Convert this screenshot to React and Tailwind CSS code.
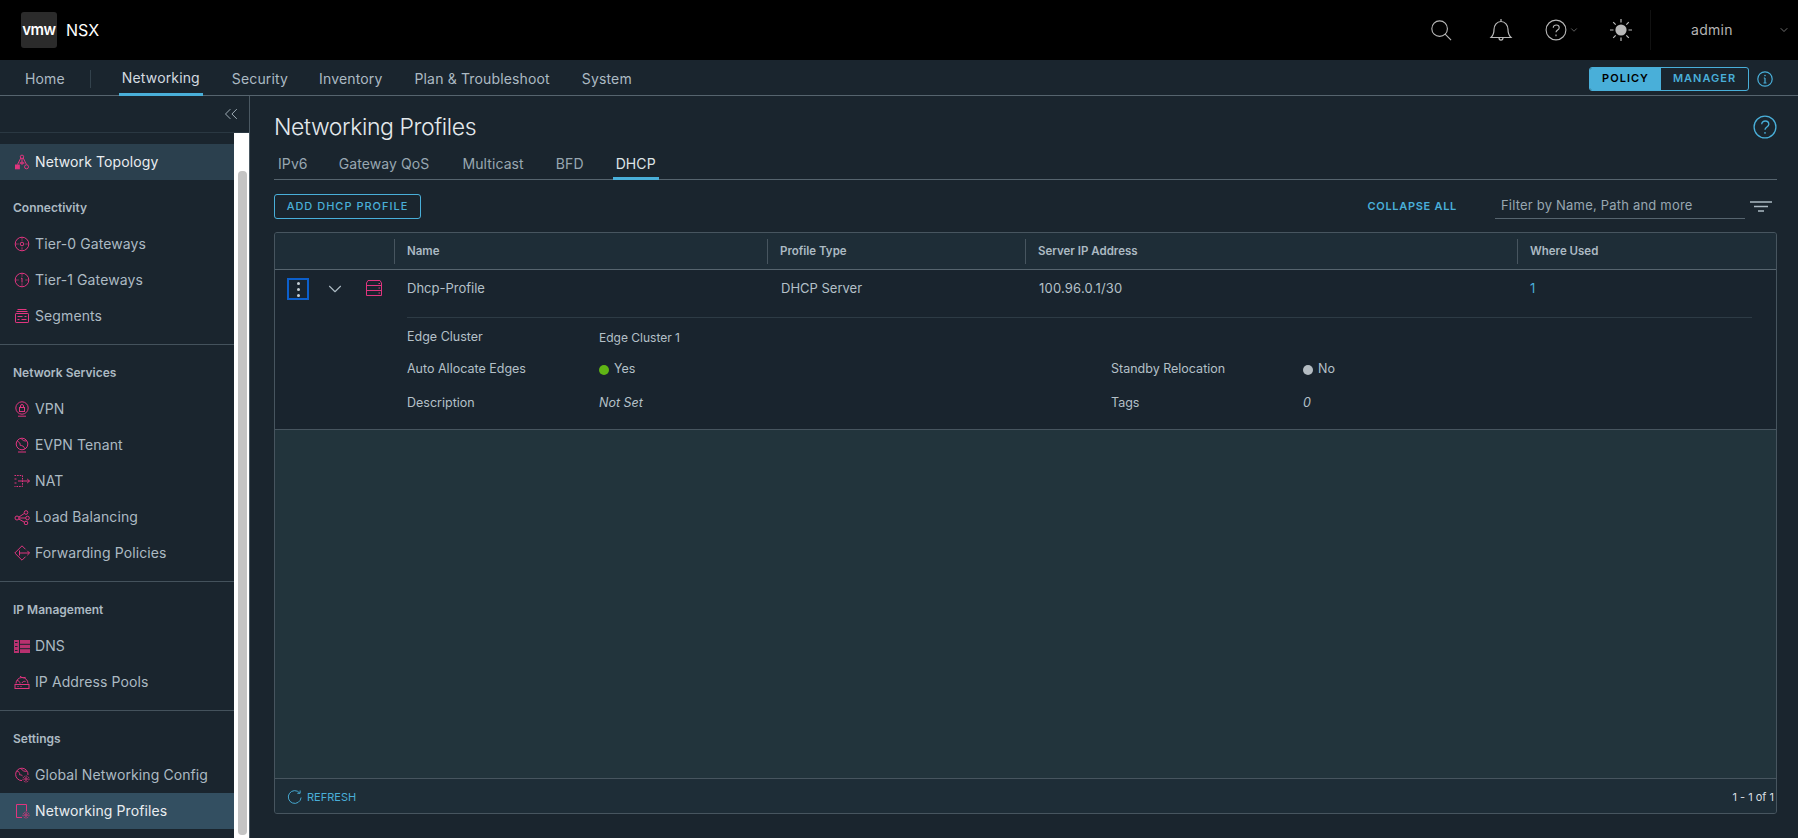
import { ChevronDown, ChevronsLeft } from "lucide-react";

const pink = "#e0357f";

const Ico = ({ children, className = "" }) => (
  <svg viewBox="0 0 16 16" fill="none" stroke={pink} strokeWidth="1" className={`w-4 h-4 shrink-0 ${className}`}>
    {children}
  </svg>
);

const TopologyIcon = () => (
  <Ico>
    <circle cx="8" cy="2.800" r="1.700" />
    <path d="M6.800 4 3.500 10.500M9.200 4l3.300 6.500M8 4.500V7.500M5.500 9h5" />
    <rect x="1.500" y="11" width="3.800" height="3.800" fill={pink} />
    <circle cx="12.500" cy="12.800" r="2" />
    <circle cx="8" cy="9" r="1.200" />
  </Ico>
);
const GatewayIcon = ({ n }) => (
  <Ico>
    <circle cx="8" cy="8" r="6.800" />
    <path d="M8 1.500v3M8 11.500v3M1.500 8h3M11.500 8h3" strokeDasharray="1.200 .8" />
    {n === 0 ? <circle cx="8" cy="8" r="1.800" /> : <path d="M7 6.500 8 6v4.500" />}
  </Ico>
);
const SegmentsIcon = () => (
  <Ico>
    <path d="M3.500 1.500h9M2.500 3.500h11" />
    <rect x="1.500" y="5.500" width="13" height="9" rx=".6" />
    <path d="M3.500 8.500h5M7.500 11.500h5M10.500 8.500h2M3.500 11.500h2" />
  </Ico>
);
const VpnIcon = () => (
  <Ico>
    <circle cx="8" cy="7" r="6.200" />
    <rect x="5.500" y="6.500" width="5" height="4" />
    <path d="M6.500 6.500V5a1.500 1.500 0 0 1 3 0v1.500M4 15.200h8" />
  </Ico>
);
const EvpnIcon = () => (
  <Ico>
    <circle cx="8" cy="7" r="5.800" />
    <path d="M3.500 4.500c2 .5 3 2 2.600 3.800M7.500 1.700c1 2 3 2.500 5.300 2.200M6.200 8.400c2 0 4 1 4.600 3.400M4 15h8" />
  </Ico>
);
const NatIcon = () => (
  <Ico>
    <path d="M.5 2.500h8v11h-8" strokeDasharray="1.600 1" />
    <path d="M.5 6h2M.5 10h2" />
    <path d="M4 8h11.500M13.200 6l2.300 2-2.300 2" />
  </Ico>
);
const LbIcon = () => (
  <Ico>
    <circle cx="3" cy="9" r="2" />
    <circle cx="12" cy="3.500" r="1.800" />
    <circle cx="13.500" cy="9" r="1.800" />
    <circle cx="12" cy="14" r="1.800" />
    <path d="m5 8 5.400-3.600M5 9h6.700M4.800 10l5.600 3.200" />
  </Ico>
);
const ForwardIcon = () => (
  <Ico>
    <path d="M8 .8.8 8 8 15.200l3.500-3.500M11.500 4.300 8 .8" />
    <path d="M5.500 5.500V10.500M5.500 8H15.500M13.300 5.800 15.500 8l-2.200 2.200" />
  </Ico>
);
const DnsIcon = () => (
  <svg viewBox="0 0 16 13" className="w-4 h-[13px] shrink-0">
    <rect width="16" height="13" fill={pink} opacity=".8" />
    <path d="M5.500 0v13M1 2.500h2.500M1 6.500h2.500M1 10.500h2.500M6 4.300h10M6 8.700h10" stroke="#1a252e" strokeWidth="1" />
  </svg>
);
const PoolIcon = () => (
  <Ico>
    <path d="M2 9.500a6 6 0 1 1 12 0" />
    <path d="M3 6.500c2 .3 3 1.500 3 3M6 2c1 1.600 3 2 5.600 1.400M8 9c.5-1.500 2-2 3.500-1.500" />
    <rect x="1" y="10.500" width="14" height="4" />
    <path d="M3.500 12.500h1M6.500 12.500h1" />
  </Ico>
);
const GlobalIcon = () => (
  <Ico>
    <path d="M8 13.600A6.200 6.200 0 1 1 14 8" />
    <path d="M3 4c2 .5 3 2 2.600 3.800M7.500 2c1 2 3 2.500 5.300 2.200M5.600 7.800c1.600 0 2.600.5 3 1.400" />
    <circle cx="12" cy="12" r="1.200" />
    <circle cx="12" cy="12" r="3" strokeDasharray="1.200 .8" />
  </Ico>
);
const ProfileIcon = () => (
  <Ico>
    <path d="M8 14.500H2.500v-13h10V8" />
    <circle cx="12" cy="12" r="1.200" />
    <circle cx="12" cy="12" r="3" strokeDasharray="1.200 .8" />
  </Ico>
);

const groups = [
  {
    title: "Connectivity",
    pad: "pt-[19px]",
    end: "pb-[10px] border-b border-[#44525c]",
    items: [
      ["Tier-0 Gateways", <GatewayIcon n={0} />],
      ["Tier-1 Gateways", <GatewayIcon n={1} />],
      ["Segments", <SegmentsIcon />],
    ],
  },
  {
    title: "Network Services",
    pad: "pt-[19px]",
    end: "pb-[10px] border-b border-[#44525c]",
    items: [
      ["VPN", <VpnIcon />],
      ["EVPN Tenant", <EvpnIcon />],
      ["NAT", <NatIcon />],
      ["Load Balancing", <LbIcon />],
      ["Forwarding Policies", <ForwardIcon />],
    ],
  },
  {
    title: "IP Management",
    pad: "pt-[19px]",
    end: "pb-[10px] border-b border-[#44525c]",
    items: [
      ["DNS", <DnsIcon />],
      ["IP Address Pools", <PoolIcon />],
    ],
  },
  {
    title: "Settings",
    pad: "pt-[19px]",
    end: "",
    items: [
      ["Global Networking Config", <GlobalIcon />],
      ["Networking Profiles", <ProfileIcon />, true],
    ],
  },
];

function SideItem({ label, icon, active, className = "" }) {
  return (
    <a className={`flex items-center h-9 pl-[14px] gap-[5px] text-sm tracking-[0.1px] ${active ? "text-[#eaedf0]" : "text-[#acbac3]"} ${className}`}>
      {icon}
      <span>{label}</span>
    </a>
  );
}

function Sidebar() {
  return (
    <aside className="w-[250px] shrink-0 flex flex-col border-r border-[#4a5862] overflow-hidden">
      <div className="h-[37px] shrink-0 flex items-center justify-end pr-[7px] border-b border-[#2a3842]">
        <ChevronsLeft size={22} strokeWidth={1} color="#acbac3" />
      </div>
      <div className="flex flex-1 min-h-0">
        <div className="w-[234px] shrink-0 pt-[11px]">
          <SideItem label="Network Topology" icon={<TopologyIcon />} active className="bg-[#2b404e]" />
          {groups.map((g) => (
            <div key={g.title} className={g.end}>
              <h4 className={`${g.pad} pb-[9px] pl-[13px] text-xs leading-[18px] font-semibold text-[#acbac3]`}>
                {g.title}
              </h4>
              {g.items.map(([label, icon, active]) => (
                <SideItem key={label} label={label} icon={icon} active={active} className={active ? "bg-[#334f61]" : ""} />
              ))}
            </div>
          ))}
        </div>
        <div className="flex-1 bg-white flex flex-col pt-[38px] pb-[3px] pl-1">
          <div className="w-[9px] flex-1 rounded bg-[#c4c4c4]" />
        </div>
      </div>
    </aside>
  );
}

function TopBar() {
  return (
    <header className="h-[60px] shrink-0 bg-black flex items-center">
      <div className="ml-[21px] w-9 h-9 rounded-[3px] bg-[#2b2b2b] flex items-center justify-center text-white text-[15px] font-semibold tracking-[-0.5px]">
        vmw
      </div>
      <span className="ml-[9px] text-white text-base">NSX</span>
      <div className="ml-auto flex items-center text-[#b8b8b8]">
        <svg viewBox="0 0 24 24" fill="none" stroke="currentColor" strokeWidth="1.200" className="w-[22px] h-[22px] mr-[37px]">
          <circle cx="10.500" cy="10.500" r="8.500" />
          <path d="m16.500 16.500 6.500 6.500" />
        </svg>
        <svg viewBox="0 0 24 24" fill="none" stroke="currentColor" strokeWidth="1.200" className="w-[24px] h-[24px] mr-[32px]">
          <path d="M2 19.500c2.500-2.500 3-4 3-8 0-4.500 3-8 7-8s7 3.500 7 8c0 4 .5 5.500 3 8ZM10 19.500c0 3.500 4 3.500 4 0M12 1v2.500" />
        </svg>
        <svg viewBox="0 0 24 24" fill="none" stroke="currentColor" strokeWidth="1.200" className="w-[22px] h-[22px]">
          <circle cx="12" cy="12" r="10.800" />
          <path d="M9 9.500c0-4 6.500-4 6.500 0 0 2.500-3.500 2.500-3.500 5M12 17v1.800" />
        </svg>
        <ChevronDown size={10} strokeWidth={1.200} className="ml-[2px] mr-[30px]" />
        <svg viewBox="0 0 24 24" className="w-6 h-6 mr-[17px]" fill="currentColor" stroke="currentColor" strokeWidth="1.200">
          <circle cx="12" cy="12" r="5.600" stroke="none" />
          <path d="M12 1v3.500M12 19.500V23M1 12h3.500M19.500 12H23M4.200 4.200l2.500 2.500M17.300 17.300l2.500 2.500M4.200 19.800l2.500-2.500M17.300 6.700l2.500-2.500" />
        </svg>
        <div className="w-px h-10 bg-[#111111]" />
        <span className="ml-[40px] w-[52px] text-sm tracking-[0.3px] text-[#b4b4b4]">admin</span>
        <ChevronDown size={12} strokeWidth={1.200} className="ml-[35px] mr-2" />
      </div>
    </header>
  );
}

function NavBar() {
  const links = [
    ["Security", "ml-[29px]"],
    ["Inventory", "ml-[31px]"],
    ["Plan & Troubleshoot", "ml-[32px]"],
    ["System", "ml-[32px]"],
  ];
  return (
    <nav className="h-[36px] shrink-0 flex items-center pt-[3px] border-b border-[#56646e] text-sm tracking-[0.15px] text-[#acbac3]">
      <span className="ml-[25px]">Home</span>
      <span className="ml-[25px] w-px h-[18px] bg-[#33424c]" />
      <span className="ml-[28px] self-start h-[33px] flex items-center px-[3px] border-b-[3px] border-[#49afd9] text-[#d4dbe0]">
        Networking
      </span>
      {links.map(([l, m]) => (
        <span key={l} className={m}>
          {l}
        </span>
      ))}
      <div className="ml-auto flex items-center mr-[25px]">
        <div className="flex h-6 rounded-[3px] border border-[#49afd9] text-[11px] font-semibold tracking-[1px] overflow-hidden">
          <span className="w-[71px] bg-[#49afd9] text-black flex items-center justify-center">POLICY</span>
          <span className="w-[87px] text-[#49afd9] flex items-center justify-center">MANAGER</span>
        </div>
        <svg viewBox="0 0 16 16" fill="none" stroke="#49afd9" strokeWidth="1.200" className="w-4 h-4 ml-2">
          <circle cx="8" cy="8" r="7.200" />
          <path d="M8 7v5M6.500 12h3M6.800 7H8" />
          <circle cx="8" cy="4.600" r=".8" fill="#49afd9" stroke="none" />
        </svg>
      </div>
    </nav>
  );
}

function Tabs() {
  const tabs = [
    ["IPv6", "ml-1"],
    ["Gateway QoS", "ml-[31px]"],
    ["Multicast", "ml-[33px]"],
    ["BFD", "ml-[32px]"],
  ];
  return (
    <div className="h-[36px] mt-[3px] flex items-center border-b border-[#56646e] text-sm tracking-[0.1px] text-[#98a7b1]">
      {tabs.map(([t, m]) => (
        <span key={t} className={`${m} pt-[5px]`}>
          {t}
        </span>
      ))}
      <span className="ml-[29px] px-[3px] h-[36px] flex items-center pt-[7px] border-b-[3px] border-[#49afd9] text-[#dfe4e8]">
        DHCP
      </span>
    </div>
  );
}

function Toolbar() {
  return (
    <div className="mt-[14px] flex items-center h-[25px]">
      <button className="w-[147px] h-[25px] rounded-[3px] border border-[#49afd9] text-[11px] font-medium tracking-[1px] text-[#49afd9]">
        ADD DHCP PROFILE
      </button>
      <a className="ml-auto text-[11px] font-semibold tracking-[0.7px] text-[#49afd9]">COLLAPSE ALL</a>
      <div className="ml-[38px] w-[250px] h-[25px] flex items-center pl-[6px] border-b border-[#56646e] text-[13px] tracking-[0.2px] text-[#98a7b1]">
        Filter by Name, Path and more
      </div>
      <svg viewBox="0 0 22 12" fill="none" stroke="#acbac3" strokeWidth="1.500" className="w-[22px] h-3 ml-[5px] mr-[5px]">
        <path d="M0 1h22M4 5.500h14M8 10h6" />
      </svg>
    </div>
  );
}

function DetailRow({ label, value, label2, value2, className = "" }) {
  return (
    <div className={`flex items-center h-[21px] text-[12.5px] ${className}`}>
      <span className="w-[192px] shrink-0">{label}</span>
      <span className="w-[512px] shrink-0 flex items-center">{value}</span>
      <span className="w-[192px] shrink-0">{label2}</span>
      <span className="flex items-center">{value2}</span>
    </div>
  );
}

function Table() {
  const cols = [
    ["Name", "w-[373px]"],
    ["Profile Type", "w-[258px]"],
    ["Server IP Address", "w-[492px]"],
    ["Where Used", "flex-1"],
  ];
  return (
    <div className="mt-[13px] mb-[24px] flex-1 min-h-0 flex flex-col rounded-[3px] border border-[#47555f] bg-[#22343c] text-[13px] text-[#b4c0c8] overflow-hidden">
      <div className="h-[37px] shrink-0 flex items-center pt-px pl-[119px] bg-[#1e2d37] border-b border-[#56646e]">
        {cols.map(([c, w]) => (
          <div key={c} className={`${w} h-[25px] flex items-center pl-[12px] border-l border-[#47555f] text-[11.5px] font-semibold text-[#acbac3]`}>
            {c}
          </div>
        ))}
      </div>
      <div className="h-[160px] shrink-0 flex bg-[#19242e] border-b border-[#47555f]">
        <div className="w-[132px] shrink-0 flex items-start pt-[8px] pl-[12px]">
          <button className="w-[22px] h-[22px] border-2 border-[#0c5fcb] flex flex-col items-center justify-center gap-[3px]">
            <i className="w-[3px] h-[3px] rounded-full bg-[#c6d0d6]" />
            <i className="w-[3px] h-[3px] rounded-full bg-[#c6d0d6]" />
            <i className="w-[3px] h-[3px] rounded-full bg-[#c6d0d6]" />
          </button>
          <ChevronDown size={22} strokeWidth={1.200} color="#acbac3" className="ml-[15px]" />
          <svg viewBox="0 0 16 16" fill="none" stroke={pink} strokeWidth="1" className="w-4 h-4 ml-[20px] mt-[2px]">
            <path d="M.5 3 2 .5h12L15.500 3v12.500H.5ZM.5 5.500h15M.5 10.500h15M12.500 3.500h1.500M12.500 8h1.500M12.500 13h1.500" />
          </svg>
        </div>
        <div className="flex-1 pr-[24px]">
          <div className="h-[48px] flex items-center border-b border-[#2d3b45] pb-[10px]">
            <span className="w-[374px]">Dhcp-Profile</span>
            <span className="w-[258px]">DHCP Server</span>
            <span className="w-[491px] tracking-[0.2px]">100.96.0.1/30</span>
            <span className="text-[#49afd9]">1</span>
          </div>
          <DetailRow label="Edge Cluster" value={<span className="text-xs">Edge Cluster 1</span>} className="mt-[9px]" />
          <DetailRow
            label="Auto Allocate Edges"
            value={<><i className="w-[10px] h-[10px] rounded-full bg-[#60b515] mr-[5px]" />Yes</>}
            label2="Standby Relocation"
            value2={<><i className="w-[10px] h-[10px] rounded-full bg-[#b4bcc2] mr-[5px]" />No</>}
            className="mt-[11px]"
          />
          <DetailRow
            label="Description"
            value={<em>Not Set</em>}
            label2="Tags"
            value2={<em>0</em>}
            className="mt-[13px]"
          />
        </div>
      </div>
      <div className="flex-1" />
      <div className="h-[35px] shrink-0 flex items-center pt-[2px] bg-[#1e2d37] border-t border-[#47555f] pl-[12px] pr-[2px]">
        <svg viewBox="0 0 16 16" fill="none" stroke="#49afd9" strokeWidth="1" className="w-[15px] h-[15px]">
          <path d="M13.500 3.200A6.800 6.800 0 1 0 15 8M14 .5v3h-3" />
        </svg>
        <a className="ml-[5px] text-[11px] text-[#49afd9]">REFRESH</a>
        <span className="ml-auto text-[11px] text-[#d8dee2]">1 - 1 of 1</span>
      </div>
    </div>
  );
}

export default function App() {
  return (
    <div className="h-screen w-full overflow-hidden flex flex-col bg-[#1a252e] font-['Inter',sans-serif]">
      <TopBar />
      <NavBar />
      <div className="flex flex-1 min-h-0">
        <Sidebar />
        <main className="flex-1 min-w-0 flex flex-col pl-[24px] pr-[21px]">
          <div className="mt-[17px] flex items-center h-[28px] justify-between">
            <h1 className="text-[23px] font-light tracking-[-0.4px] text-[#e4e9ec]">Networking Profiles</h1>
            <svg viewBox="0 0 22 22" fill="none" stroke="#49afd9" strokeWidth="1.200" className="w-6 h-6">
              <circle cx="11" cy="11" r="10" />
              <path d="M8 8.500c0-4 6.500-4 6.500 0 0 2.500-3.500 2.500-3.500 5M11 15.500v1.800" />
            </svg>
          </div>
          <Tabs />
          <Toolbar />
          <Table />
        </main>
      </div>
    </div>
  );
}
